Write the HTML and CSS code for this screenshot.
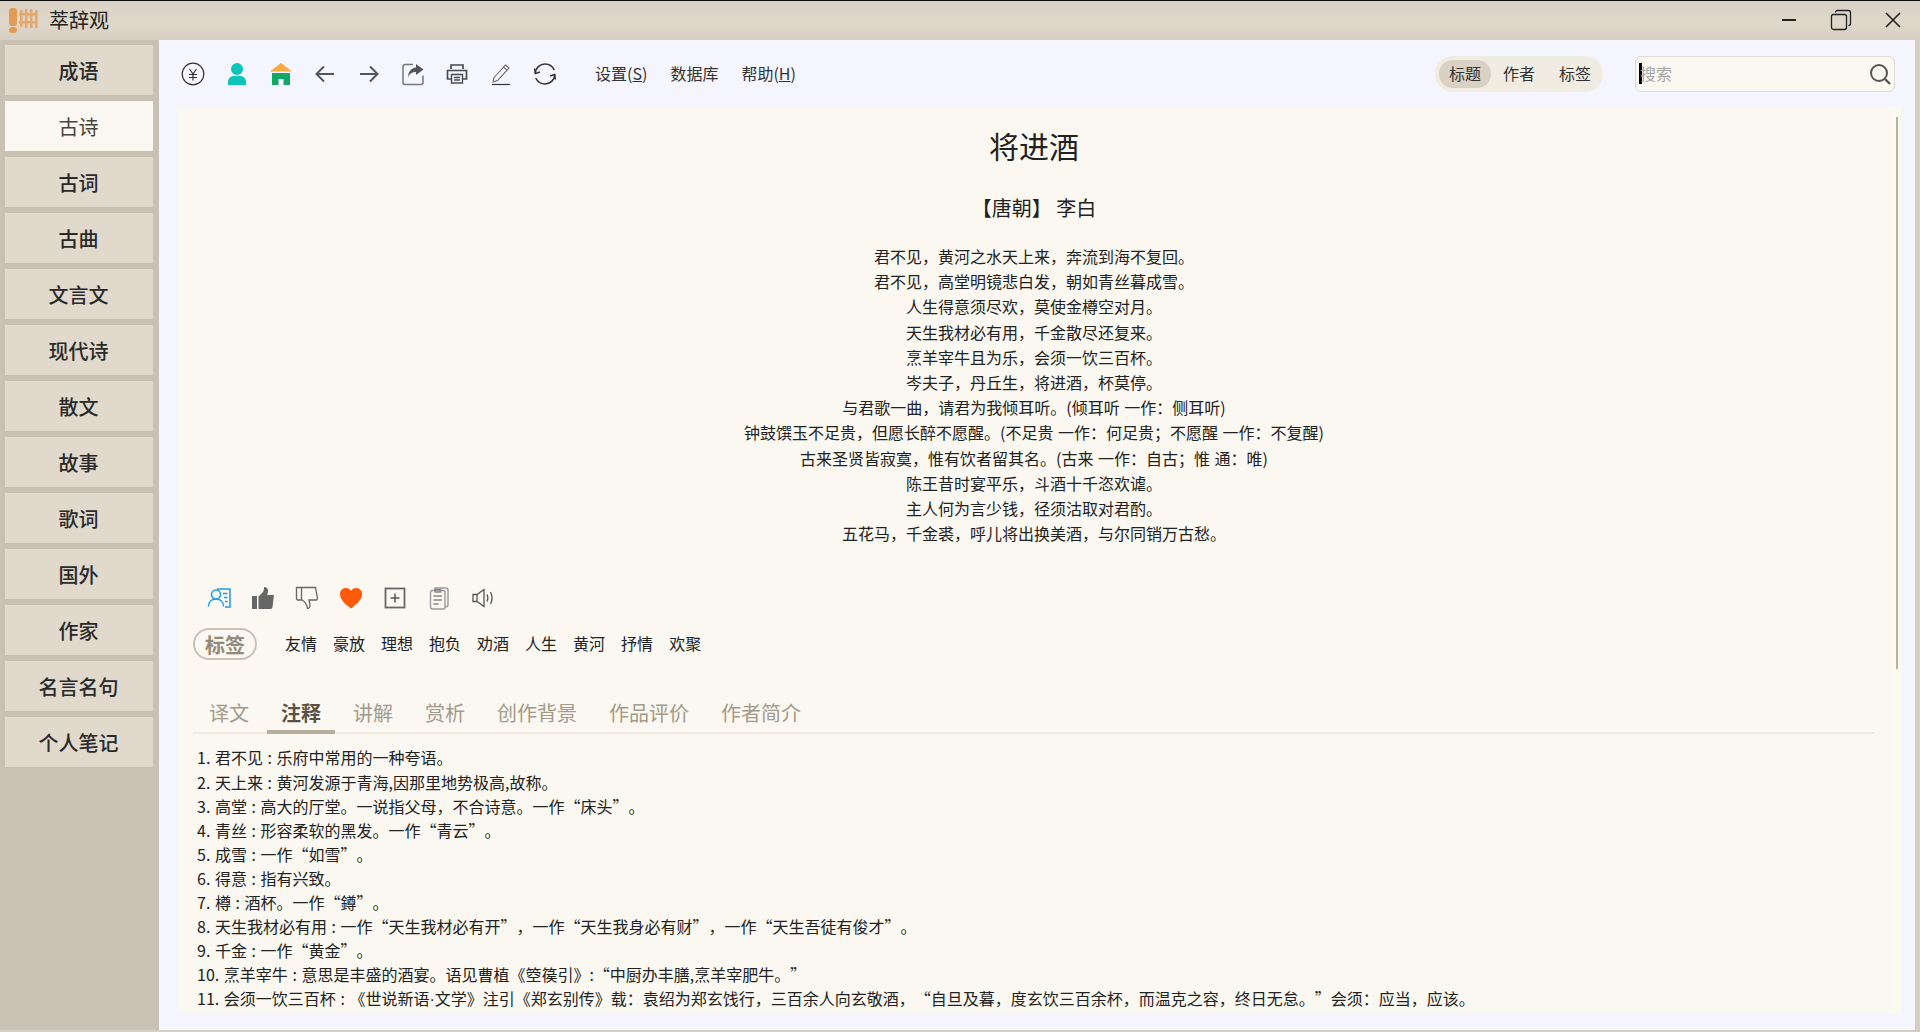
FILE: index.html
```html
<!doctype html>
<html lang="zh-CN">
<head>
  <meta charset="utf-8">
  <title>萃辞观</title>
  <link rel="stylesheet" href="styles.css">
</head>
<body>

  <div class="titleBar">
    <svg class="logo" width="30" height="26" viewBox="0 0 30 26">
      <rect x="0" y="0" width="8" height="18" rx="3" fill="#e09c55"/>
      <rect x="0" y="19" width="8" height="6" rx="3" fill="#e09c55"/>
      <g fill="#e6a76a">
        <rect x="10" y="5" width="18" height="2.500"/>
        <rect x="10" y="13" width="18" height="2.500"/>
        <rect x="11" y="2" width="2.500" height="17"/>
        <rect x="16" y="1" width="2.500" height="19"/>
        <rect x="21" y="1" width="2.500" height="19"/>
        <rect x="26" y="2" width="2.500" height="18"/>
      </g>
    </svg>
    <span class="appName">萃辞观</span>
    <div class="winButtons">
      <svg width="16" height="16" viewBox="0 0 16 16"><path d="M1 8h14" stroke="#222" stroke-width="2"/></svg>
      <svg width="22" height="22" viewBox="0 0 22 22" fill="none" stroke="#222" stroke-width="1.300"><rect x="1.500" y="5.500" width="15" height="15" rx="2"/><path d="M5.500 3.500c0-1 .7-2 2-2h11c1.300 0 2 .7 2 2v11c0 1.300-.7 2-2 2"/></svg>
      <svg width="16" height="16" viewBox="0 0 16 16"><path d="M1 1l14 14M15 1L1 15" stroke="#222" stroke-width="1.600"/></svg>
    </div>
  </div>

  <div class="body">
    <div class="sidebar">
      <div class="navItem">成语</div>
      <div class="navItem active">古诗</div>
      <div class="navItem">古词</div>
      <div class="navItem">古曲</div>
      <div class="navItem">文言文</div>
      <div class="navItem">现代诗</div>
      <div class="navItem">散文</div>
      <div class="navItem">故事</div>
      <div class="navItem">歌词</div>
      <div class="navItem">国外</div>
      <div class="navItem">作家</div>
      <div class="navItem">名言名句</div>
      <div class="navItem">个人笔记</div>
    </div>

    <div class="main">
      <div class="toolbar">
        <div class="toolIcons">
          <div class="iconBtn"><svg width="24" height="24" viewBox="0 0 24 24" fill="none" stroke="#333" stroke-width="1.200"><circle cx="12" cy="12" r="10.800"/><path d="M8.500 7l3.500 5 3.500-5M8 12.500h8M8 15.500h8M12 12v6.500"/></svg></div>
          <div class="iconBtn"><svg width="24" height="24" viewBox="0 0 24 24" fill="#0cc4b8"><circle cx="12" cy="7" r="6"/><path d="M3 23v-3c0-4 3-6 6-6h6c3 0 6 2 6 6v3z"/></svg></div>
          <div class="iconBtn"><svg width="24" height="24" viewBox="0 0 24 24"><path d="M3 11h18v12H3z" fill="#14a866"/><path d="M12 1L23 9.500H1z" fill="#fba83f"/><path d="M9.500 17h5v6h-5z" fill="#f4f5ff"/></svg></div>
          <div class="iconBtn"><svg width="24" height="24" viewBox="0 0 24 24" fill="none" stroke="#555" stroke-width="2"><path d="M21 12H4M11 4.500L3.500 12l7.500 7.500"/></svg></div>
          <div class="iconBtn"><svg width="24" height="24" viewBox="0 0 24 24" fill="none" stroke="#555" stroke-width="2"><path d="M3 12h17M13 4.500l7.500 7.500-7.500 7.500"/></svg></div>
          <div class="iconBtn"><svg width="24" height="24" viewBox="0 0 24 24"><path d="M12 2.500H4a2 2 0 0 0-2 2v16a2 2 0 0 0 2 2h16a2 2 0 0 0 2-2v-7" fill="none" stroke="#777" stroke-width="1.500"/><path d="M15 2l7.500 5.500-7.500 5.500v-3c-4 0-6.500 1.500-8 5 .3-5 3-9 8-9.500z" fill="#555"/></svg></div>
          <div class="iconBtn"><svg width="24" height="24" viewBox="0 0 24 24" fill="none" stroke="#4a4a4a" stroke-width="1.700"><path d="M6 7V3h12v4"/><path d="M6 17H2.500V8.500h19V17H18"/><path d="M6.500 12.500h11V21h-11zM9 15.500h6M9 18h6" stroke-width="1.400"/></svg></div>
          <div class="iconBtn"><svg width="24" height="24" viewBox="0 0 24 24" fill="none" stroke="#666" stroke-width="1.100"><path d="M5 15.500L16.500 3l3.500 3L8.500 18.500l-4.500 1.500zM14.500 5.200l3.500 3"/><path d="M3 22.500h18" stroke="#333" stroke-width="1.200"/></svg></div>
          <div class="iconBtn"><svg width="24" height="24" viewBox="0 0 24 24" fill="none" stroke="#333" stroke-width="1.600"><path d="M2 11.500C2.500 6 7 2 12 2c4 0 7.500 2.300 9.300 6"/><path d="M22 12.500c-.5 5.500-5 9.500-10 9.500-4 0-7.500-2.300-9.300-6"/><path d="M1.500 6.500l1 5 4.500-1.500M22.500 17.500l-1-5-4.500 1.500" stroke-width="1.400"/></svg></div>
        </div>
        <div class="menus">
          <span>设置(<u>S</u>)</span>
          <span>数据库</span>
          <span>帮助(<u>H</u>)</span>
        </div>
        <div class="searchType">
          <span class="typeOpt on">标题</span>
          <span class="typeOpt">作者</span>
          <span class="typeOpt">标签</span>
        </div>
        <div class="searchBox">
          <span class="caret"></span>
          <span class="holder">搜索</span>
          <svg width="22" height="22" viewBox="0 0 22 22" fill="none" stroke="#555" stroke-width="2"><circle cx="10" cy="10" r="8"/><path d="M16 16l5 5" stroke-width="2.400"/></svg>
        </div>
      </div>

      <div class="panel">
        <div class="content">
          <h1 class="poemTitle">将进酒</h1>
          <div class="poemAuthor">【唐朝】 李白</div>
          <div class="poem">
            <p>君不见，黄河之水天上来，奔流到海不复回。</p>
            <p>君不见，高堂明镜悲白发，朝如青丝暮成雪。</p>
            <p>人生得意须尽欢，莫使金樽空对月。</p>
            <p>天生我材必有用，千金散尽还复来。</p>
            <p>烹羊宰牛且为乐，会须一饮三百杯。</p>
            <p>岑夫子，丹丘生，将进酒，杯莫停。</p>
            <p>与君歌一曲，请君为我倾耳听。(倾耳听 一作：侧耳听)</p>
            <p>钟鼓馔玉不足贵，但愿长醉不愿醒。(不足贵 一作：何足贵；不愿醒 一作：不复醒)</p>
            <p>古来圣贤皆寂寞，惟有饮者留其名。(古来 一作：自古；惟 通：唯)</p>
            <p>陈王昔时宴平乐，斗酒十千恣欢谑。</p>
            <p>主人何为言少钱，径须沽取对君酌。</p>
            <p>五花马，千金裘，呼儿将出换美酒，与尔同销万古愁。</p>
          </div>

          <div class="actions">
            <div class="iconBtn"><svg width="24" height="24" viewBox="0 0 24 24" fill="none" stroke="#1e9be8" stroke-width="1.500"><circle cx="9" cy="8.500" r="4.500"/><path d="M1.500 20.500c0-4.500 3-7.500 7.500-7.500s7.500 3 7.500 7.500"/><path d="M10 3h13v18h-5M16 7.500h4.500M17 11.500h3.500M18 15.500h2.500"/></svg></div>
            <div class="iconBtn"><svg width="24" height="24" viewBox="0 0 24 24" fill="#666"><path d="M1 10h5v13H1z"/><path d="M7.500 10.500L12 6c.8-1 1-3 1-5 2.500 0 4 1.500 4 3.500 0 2-.5 3.500-1 4.500h7l-1.500 12c-.1 1-.8 2-2 2H7.500z"/></svg></div>
            <div class="iconBtn"><svg width="24" height="24" viewBox="0 0 24 24" fill="none" stroke="#666" stroke-width="1.300"><path d="M1.500 1.500h5v12.500h-4l-1-1zM6.500 1.500h14l2 11-1 1.500h-7.500l1 4.500c.3 2-1 4-2.500 4-.3-3-1.500-6-6-9"/></svg></div>
            <div class="iconBtn"><svg width="24" height="24" viewBox="0 0 24 24" fill="#ff5a0a"><path d="M12 22.500C6 18 1 13.500 1 8c0-3.500 2.500-6 5.800-6 2.300 0 4.200 1.200 5.200 3 1-1.800 2.900-3 5.200-3C20.500 2 23 4.500 23 8c0 5.500-5 10-11 14.500z"/></svg></div>
            <div class="iconBtn"><svg width="24" height="24" viewBox="0 0 24 24" fill="none" stroke="#555" stroke-width="1.500"><rect x="2.500" y="2.500" width="19" height="19" stroke="#666" stroke-width="1.800"/><path d="M12 7.500v9M7.500 12h9"/></svg></div>
            <div class="iconBtn"><svg width="24" height="24" viewBox="0 0 24 24" fill="none" stroke="#999" stroke-width="1.400"><path d="M8 4.500V2h11c1.200 0 2 .8 2 2v15c0 1.200-.8 1.800-2 1.800h-1"/><rect x="3.500" y="4.500" width="14.500" height="18.500" rx="2"/><path d="M8 3.500h5.500v2.500H8zM6.500 10h8.500M6.500 14h8.500M6.500 18h5" stroke="#888"/></svg></div>
            <div class="iconBtn"><svg width="24" height="24" viewBox="0 0 24 24" fill="none" stroke="#555" stroke-width="1.300"><path d="M2 8.500h4L13 3.500v17L6 15.500H2zM6 8.500v7"/><path d="M16 8.500c1 2 1 5 0 7M19.500 6c1.800 3.500 1.800 8.500 0 12"/></svg></div>
          </div>

          <div class="tagRow">
            <span class="tagLabel">标签</span>
            <div class="tags">
              <span>友情</span>
              <span>豪放</span>
              <span>理想</span>
              <span>抱负</span>
              <span>劝酒</span>
              <span>人生</span>
              <span>黄河</span>
              <span>抒情</span>
              <span>欢聚</span>
            </div>
          </div>

          <div class="tabs">
            <div class="tab">译文</div>
            <div class="tab active">注释</div>
            <div class="tab">讲解</div>
            <div class="tab">赏析</div>
            <div class="tab">创作背景</div>
            <div class="tab">作品评价</div>
            <div class="tab">作者简介</div>
          </div>

          <div class="notes">
            <p>1. 君不见 : 乐府中常用的一种夸语。</p>
            <p>2. 天上来 : 黄河发源于青海,因那里地势极高,故称。</p>
            <p>3. 高堂 : 高大的厅堂。一说指父母，不合诗意。一作“床头”。</p>
            <p>4. 青丝 : 形容柔软的黑发。一作“青云”。</p>
            <p>5. 成雪 : 一作“如雪”。</p>
            <p>6. 得意 : 指有兴致。</p>
            <p>7. 樽 : 酒杯。一作“鐏”。</p>
            <p>8. 天生我材必有用 : 一作“天生我材必有开”，一作“天生我身必有财”，一作“天生吾徒有俊才”。</p>
            <p>9. 千金 : 一作“黄金”。</p>
            <p>10. 烹羊宰牛 : 意思是丰盛的酒宴。语见曹植《箜篌引》:“中厨办丰膳,烹羊宰肥牛。”</p>
            <p>11. 会须一饮三百杯 : 《世说新语<span class="midDot">·</span>文学》注引《郑玄别传》载：袁绍为郑玄饯行，三百余人向玄敬酒，“自旦及暮，度玄饮三百余杯，而温克之容，终日无怠。”会须：应当，应该。</p>
          </div>
        </div>
        <div class="scrollTrack"><div class="scrollThumb"></div></div>
      </div>
    </div>
  </div>

</body>
</html>
```

FILE: styles.css
```css
* {
  box-sizing: border-box;
}
html, body {
  height: 100%;
}
body {
  margin: 0;
  display: flex;
  flex-direction: column;
  overflow: hidden;
  background: #d5cfc3;
  color: #222;
  font-family: "Noto Sans CJK SC", "Noto Sans", sans-serif;
  font-size: 16px;
  text-spacing-trim: space-all;
}
p, h1 {
  margin: 0;
}

/* title bar */
.titleBar {
  height: 40px;
  flex: none;
  display: flex;
  align-items: center;
  padding-left: 9px;
  padding-bottom: 2px;
  border-top: 1px solid #111;
  background-image: linear-gradient(to bottom, #d9d1c3, #dfd8ca 55%, #d7cfc1);
}
.logo {
  flex: none;
  margin-top: 2px;
}
.appName {
  margin-left: 10px;
  font-size: 20px;
  color: #222;
}
.winButtons {
  margin-left: auto;
  display: flex;
  align-items: center;
  gap: 33px;
  padding-right: 19px;
}

/* sidebar */
.body {
  flex: 1;
  display: flex;
  min-height: 0;
  padding: 0 5px 2px 0;
}
.sidebar {
  width: 159px;
  flex: none;
  padding: 5px 6px 0 5px;
  display: flex;
  flex-direction: column;
  gap: 6px;
  background: #c9c1b4;
}
.navItem {
  height: 50px;
  flex: none;
  display: flex;
  align-items: center;
  justify-content: center;
  padding-right: 1px;
  background: #e0d9cc;
  color: #2a2a2a;
  font-size: 20px;
  font-weight: 500;
}
.navItem.active {
  background: #fbf8f1;
  color: #4a443a;
  font-weight: 400;
}

/* main */
.main {
  flex: 1;
  min-width: 0;
  display: flex;
  flex-direction: column;
  padding: 0 14px 17px 18px;
  background: #f4f5ff;
}
.toolbar {
  height: 67px;
  flex: none;
  display: flex;
  align-items: center;
  margin-right: -1px;
}
.iconBtn {
  width: 44px;
  height: 28px;
  flex: none;
  display: flex;
  align-items: center;
  justify-content: center;
}
.toolIcons {
  display: flex;
  margin-left: -6px;
}
.menus {
  display: flex;
  gap: 23px;
  margin-left: 28px;
  margin-top: -2px;
  font-size: 16px;
  color: #333;
}
.searchType {
  margin-left: auto;
  height: 36px;
  width: 168px;
  display: flex;
  align-items: center;
  padding: 0 4px;
  border-radius: 18px;
  background: #f0ece1;
  color: #333;
}
.typeOpt {
  width: 52px;
  height: 28px;
  flex: none;
  margin-right: 2px;
  padding-bottom: 2px;
  display: flex;
  align-items: center;
  justify-content: center;
  border-radius: 14px;
}
.typeOpt:last-child {
  margin-left: 2px;
  margin-right: 0;
}
.typeOpt.on {
  background: #d8d1c4;
}
.searchBox {
  width: 260px;
  height: 36px;
  margin-left: 32px;
  margin-right: 7px;
  display: flex;
  align-items: center;
  padding: 0 3px;
  border: 1px solid #e0dbd0;
  border-radius: 6px;
  background: #faf8f1;
}
.caret {
  width: 3px;
  height: 21px;
  flex: none;
  background: #000;
}
.holder {
  margin-left: -2px;
  margin-top: -2px;
  color: #a5a5a5;
}
.searchBox svg {
  margin-left: auto;
}

/* poem panel */
.panel {
  flex: 1;
  min-height: 0;
  display: flex;
  background: #faf8f1;
}
.content {
  flex: 1;
  min-width: 0;
  padding: 18px 17px 0 16px;
  overflow: hidden;
}
.poemTitle {
  height: 40px;
  line-height: 40px;
  font-size: 30px;
  font-weight: 400;
  text-align: center;
  color: #222;
}
.poemAuthor {
  height: 28px;
  line-height: 28px;
  margin-top: 29px;
  font-size: 20px;
  text-align: center;
  color: #222;
}
.poem {
  margin-top: 22px;
  text-align: center;
  color: #222;
  word-spacing: 1px;
}
.poem p {
  line-height: 25.200px;
}
.actions {
  display: flex;
  margin-top: 38px;
  margin-left: 4px;
}
.tagRow {
  display: flex;
  align-items: center;
  margin-top: 16px;
}
.tagLabel {
  width: 64px;
  height: 32px;
  flex: none;
  display: flex;
  align-items: center;
  justify-content: center;
  border: 2px solid #c9c1b3;
  border-radius: 16px;
  font-size: 20px;
  font-weight: 700;
  color: #938978;
}
.tags {
  display: flex;
  gap: 16px;
  margin-left: 28px;
  margin-top: -2px;
  color: #222;
}
.tabs {
  display: flex;
  gap: 4px;
  height: 44px;
  margin-top: 30px;
  padding-left: 2px;
  border-bottom: 2px solid #efebe1;
}
.tab {
  height: 44px;
  padding: 0 14px;
  display: flex;
  align-items: center;
  font-size: 20px;
  color: #a39a8b;
}
.tab.active {
  border-bottom: 4px solid #b8ae9e;
  padding-top: 4px;
  font-weight: 700;
  color: #5a5145;
}
.notes {
  padding: 11px 0 0 4px;
  color: #222;
  word-spacing: 1px;
}
.notes p {
  line-height: 24.100px;
  white-space: nowrap;
}
.midDot {
  font-family: "Liberation Sans", sans-serif;
}
.scrollTrack {
  width: 9px;
  flex: none;
  padding: 10px 3px 0 4px;
  background: #fafaf0;
}
.scrollThumb {
  height: 552px;
  background: #b9b0a0;
}
```
